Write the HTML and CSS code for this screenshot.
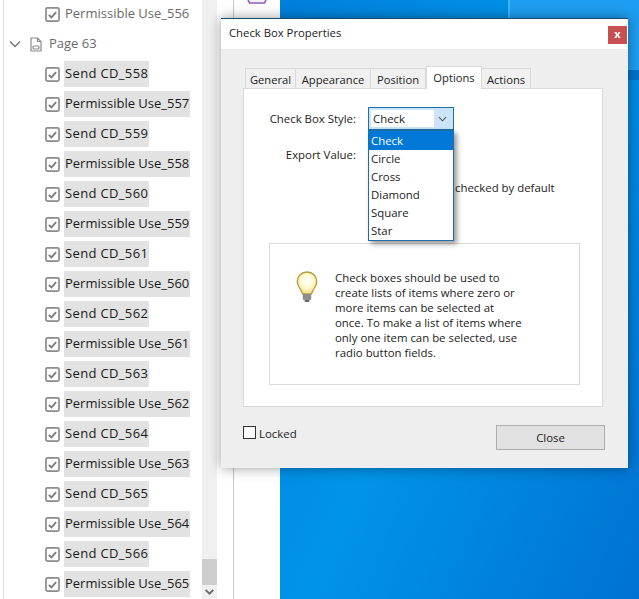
FILE: index.html
```html
<!DOCTYPE html>
<html lang="en">
<head>
<meta charset="utf-8">
<title>Check Box Properties</title>
<link rel="stylesheet" href="styles.css">
</head>
<body>
<div class="app">
  <aside class="tree">
    <div class="row"><svg class="cb" viewBox="0 0 14 14"><rect x=".9" y=".9" width="12.2" height="12.200" rx="1.500"/><path d="M3.600 7.400 6 9.600 10.400 4.800"/></svg><span class="name plain">Permissible Use_556</span></div>
    <div class="row page"><svg class="chev" viewBox="0 0 12 8"><path d="M1 1.500 6 6.500 11 1.500"/></svg><svg class="doc" viewBox="0 0 12 15"><path d="M1 1h6.500L11 4.500V14H1z M7.500 1v3.500H11"/><rect x="3" y="9" width="6" height="3" rx="1"/></svg><span class="pagename">Page 63</span></div>
    <div class="row"><svg class="cb" viewBox="0 0 14 14"><rect x=".9" y=".9" width="12.2" height="12.200" rx="1.500"/><path d="M3.600 7.400 6 9.600 10.400 4.800"/></svg><span class="name send">Send CD_558</span></div>
    <div class="row"><svg class="cb" viewBox="0 0 14 14"><rect x=".9" y=".9" width="12.2" height="12.200" rx="1.500"/><path d="M3.600 7.400 6 9.600 10.400 4.800"/></svg><span class="name">Permissible Use_557</span></div>
    <div class="row"><svg class="cb" viewBox="0 0 14 14"><rect x=".9" y=".9" width="12.2" height="12.200" rx="1.500"/><path d="M3.600 7.400 6 9.600 10.400 4.800"/></svg><span class="name send">Send CD_559</span></div>
    <div class="row"><svg class="cb" viewBox="0 0 14 14"><rect x=".9" y=".9" width="12.2" height="12.200" rx="1.500"/><path d="M3.600 7.400 6 9.600 10.400 4.800"/></svg><span class="name">Permissible Use_558</span></div>
    <div class="row"><svg class="cb" viewBox="0 0 14 14"><rect x=".9" y=".9" width="12.2" height="12.200" rx="1.500"/><path d="M3.600 7.400 6 9.600 10.400 4.800"/></svg><span class="name send">Send CD_560</span></div>
    <div class="row"><svg class="cb" viewBox="0 0 14 14"><rect x=".9" y=".9" width="12.2" height="12.200" rx="1.500"/><path d="M3.600 7.400 6 9.600 10.400 4.800"/></svg><span class="name">Permissible Use_559</span></div>
    <div class="row"><svg class="cb" viewBox="0 0 14 14"><rect x=".9" y=".9" width="12.2" height="12.200" rx="1.500"/><path d="M3.600 7.400 6 9.600 10.400 4.800"/></svg><span class="name send">Send CD_561</span></div>
    <div class="row"><svg class="cb" viewBox="0 0 14 14"><rect x=".9" y=".9" width="12.2" height="12.200" rx="1.500"/><path d="M3.600 7.400 6 9.600 10.400 4.800"/></svg><span class="name">Permissible Use_560</span></div>
    <div class="row"><svg class="cb" viewBox="0 0 14 14"><rect x=".9" y=".9" width="12.2" height="12.200" rx="1.500"/><path d="M3.600 7.400 6 9.600 10.400 4.800"/></svg><span class="name send">Send CD_562</span></div>
    <div class="row"><svg class="cb" viewBox="0 0 14 14"><rect x=".9" y=".9" width="12.2" height="12.200" rx="1.500"/><path d="M3.600 7.400 6 9.600 10.400 4.800"/></svg><span class="name">Permissible Use_561</span></div>
    <div class="row"><svg class="cb" viewBox="0 0 14 14"><rect x=".9" y=".9" width="12.2" height="12.200" rx="1.500"/><path d="M3.600 7.400 6 9.600 10.400 4.800"/></svg><span class="name send">Send CD_563</span></div>
    <div class="row"><svg class="cb" viewBox="0 0 14 14"><rect x=".9" y=".9" width="12.2" height="12.200" rx="1.500"/><path d="M3.600 7.400 6 9.600 10.400 4.800"/></svg><span class="name">Permissible Use_562</span></div>
    <div class="row"><svg class="cb" viewBox="0 0 14 14"><rect x=".9" y=".9" width="12.2" height="12.200" rx="1.500"/><path d="M3.600 7.400 6 9.600 10.400 4.800"/></svg><span class="name send">Send CD_564</span></div>
    <div class="row"><svg class="cb" viewBox="0 0 14 14"><rect x=".9" y=".9" width="12.2" height="12.200" rx="1.500"/><path d="M3.600 7.400 6 9.600 10.400 4.800"/></svg><span class="name">Permissible Use_563</span></div>
    <div class="row"><svg class="cb" viewBox="0 0 14 14"><rect x=".9" y=".9" width="12.2" height="12.200" rx="1.500"/><path d="M3.600 7.400 6 9.600 10.400 4.800"/></svg><span class="name send">Send CD_565</span></div>
    <div class="row"><svg class="cb" viewBox="0 0 14 14"><rect x=".9" y=".9" width="12.2" height="12.200" rx="1.500"/><path d="M3.600 7.400 6 9.600 10.400 4.800"/></svg><span class="name">Permissible Use_564</span></div>
    <div class="row"><svg class="cb" viewBox="0 0 14 14"><rect x=".9" y=".9" width="12.2" height="12.200" rx="1.500"/><path d="M3.600 7.400 6 9.600 10.400 4.800"/></svg><span class="name send">Send CD_566</span></div>
    <div class="row"><svg class="cb" viewBox="0 0 14 14"><rect x=".9" y=".9" width="12.2" height="12.200" rx="1.500"/><path d="M3.600 7.400 6 9.600 10.400 4.800"/></svg><span class="name">Permissible Use_565</span></div>
  </aside>
  <div class="scrollbar">
    <div class="thumb"></div>
    <svg class="sb-arrow" viewBox="0 0 10 7"><path d="M1.500 1.500 5 5 8.500 1.500"/></svg>
  </div>
  <div class="gutter"></div>
  <div class="rail"><svg class="rail-icon" viewBox="0 0 20 4"><path d="M1 0 2.500 3H17.500L19 0"/></svg></div>
  <main class="desktop"></main>
</div>

<section class="dialog">
  <header class="titlebar">
    <span class="title">Check Box Properties</span>
    <span class="close-x">x</span>
  </header>
  <div class="body">
    <nav class="tabs">
      <span class="tab tab-general">General</span>
      <span class="tab tab-appearance">Appearance</span>
      <span class="tab tab-position">Position</span>
      <span class="tab tab-options active">Options</span>
      <span class="tab tab-actions">Actions</span>
    </nav>
    <div class="panel">
      <div class="field">
        <span class="label">Check Box Style:</span>
        <div class="select">
          <span class="select-value">Check</span>
          <span class="select-btn"><svg viewBox="0 0 10 6"><path d="M1 1 5 5 9 1"/></svg></span>
          <ul class="listbox">
            <li class="selected">Check</li>
            <li>Circle</li>
            <li>Cross</li>
            <li>Diamond</li>
            <li>Square</li>
            <li>Star</li>
          </ul>
        </div>
      </div>
      <div class="field export">
        <span class="label">Export Value:</span>
      </div>
      <div class="default-row">checked by default</div>
      <div class="info">
        <svg class="bulb" viewBox="0 0 22 32">
          <defs><radialGradient id="glow" cx="50%" cy="40%" r="58%"><stop offset="0" stop-color="#ffffff"/><stop offset=".5" stop-color="#fffbd8"/><stop offset="1" stop-color="#f7df86"/></radialGradient></defs>
          <path class="glass" d="M11 1C5.400 1 1.200 5.200 1.200 10.400c0 3.300 1.500 5.400 3.200 8 .9 1.400 1.900 2.900 2.100 4.600h9c.2-1.700 1.200-3.200 2.100-4.600 1.700-2.600 3.200-4.700 3.200-8C20.800 5.200 16.600 1 11 1z"/>
          <rect class="base" x="6.800" y="23" width="8.400" height="6" rx="1"/>
          <rect class="tip" x="8.500" y="29" width="5" height="2" rx="1"/>
        </svg>
        <p class="info-text">Check boxes should be used to create lists of items where zero or more items can be selected at once. To make a list of items where only one item can be selected, use radio button fields.</p>
      </div>
    </div>
    <div class="footer">
      <label class="locked"><span class="box"></span><span class="locked-text">Locked</span></label>
      <span class="btn">Close</span>
    </div>
  </div>
</section>
</body>
</html>
```

FILE: styles.css
```css
* { box-sizing: border-box; }
html, body { margin: 0; height: 100%; overflow: hidden; }
body { font-family: "Open Sans", "Noto Sans", sans-serif; font-size: 11.4px; color: #1c1c1c; }

.app { display: flex; height: 599px; width: 639px; background: #fff; }

.tree { width: 202px; flex: none; border-left: 1px solid #fff; overflow: hidden; background: #fff; box-shadow: inset 2px 0 0 #fff, inset 3px 0 0 #dcdcdc; }
.row { height: 30px; display: flex; align-items: center; padding-left: 44px; }
.row:first-child { margin-top: -1px; }
.cb { width: 15px; height: 15px; flex: none; margin-right: 4px; fill: none; }
.cb rect { stroke: #8b8b8b; stroke-width: 1.600; }
.cb path { stroke: #7f7f7f; stroke-width: 1.800; }
.name { height: 26px; line-height: 25px; padding: 0 1px; background: #e2e2e2; font-size: 13px; color: #1a1a1a; white-space: nowrap; }
.name.send { letter-spacing: .35px; }
.name.plain { background: none; color: #6a6a6a; }
.page { padding-left: 8px; }
.chev { width: 12px; height: 8px; flex: none; fill: none; stroke: #777; stroke-width: 1.500; margin-right: 9px; }
.doc { width: 12px; height: 15px; flex: none; fill: none; stroke: #8a8a8a; stroke-width: 1.200; margin-right: 7px; }
.pagename { font-size: 13px; color: #6a6a6a; line-height: 17px; padding-bottom: 2px; }

.scrollbar { width: 15px; flex: none; background: #f0f0f0; display: flex; flex-direction: column; justify-content: flex-end; }
.thumb { height: 26px; background: #cdcdcd; }
.sb-arrow { width: 15px; height: 14px; padding: 3px 2px; fill: none; stroke: #666; stroke-width: 1.600; flex: none; }
.gutter { width: 17px; flex: none; background: #fff; border-right: 1px solid #c8c8c8; }
.rail { width: 46px; flex: none; background: #fff; }
.rail-icon { display: block; width: 20px; height: 4px; margin-left: 13px; fill: #f4f0fb; stroke: #8e5fc4; stroke-width: 1.600; }
.desktop { flex: 1; background:
    linear-gradient(#38b8f6, #38b8f6) 228px 0 / 2px 70px no-repeat,
    linear-gradient(#1e9ef2, #1e9ef2) 230px 0 / 130px 70px no-repeat,
    linear-gradient(#0072cc, #0072cc) 228px 70px / 132px 10px no-repeat,
    linear-gradient(115deg, #0080dc 0%, #0094e8 48%, #0072d2 100%); }

.dialog { position: absolute; left: 221px; top: 18px; width: 407px; height: 450px; background: #eee; border-top: 1px solid #1a4a6c; box-shadow: 0 0 12px rgba(0,0,0,.4); display: flex; flex-direction: column; }
.titlebar { height: 30px; background: #fff; display: flex; align-items: center; justify-content: space-between; padding: 0 1px 0 8px; flex: none; }
.title { font-size: 11.300px; color: #222; line-height: 16px; padding-bottom: 2px; }
.close-x { width: 19px; height: 18px; margin-top: 2px; background: #c75050; color: #fff; font-size: 11px; font-weight: 700; line-height: 16px; text-align: center; }
.body { flex: 1; padding: 17px 23px 0 22px; display: flex; flex-direction: column; }
.tabs { display: flex; align-items: flex-start; height: 23px; padding-left: 2px; position: relative; z-index: 1; margin-bottom: -1px; }
.tab { height: 20px; margin-top: 2px; line-height: 21px; text-align: center; font-size: 11.200px; border: 1px solid #d9d9d9; border-bottom: 0; border-left-width: 0; background: #f0f0f0; color: #222; }
.tab-general { width: 51px; border-left-width: 1px; }
.tab-appearance { width: 75px; }
.tab-position { width: 55px; }
.tab-options { width: 56px; }
.tab-actions { width: 49px; }
.tab.active { height: 23px; margin-top: 0; line-height: 21px; background: #fff; border-left: 1px solid #d9d9d9; color: #1c1c1c; }

.panel { width: 360px; height: 319px; background: #fff; border: 1px solid #d9d9d9; padding: 18px 25px 0; flex: none; }
.field { display: flex; align-items: center; height: 23px; }
.label { width: 87px; text-align: right; flex: none; white-space: nowrap; }
.select { width: 86px; height: 23px; margin-left: 12px; border: 1px solid #1c6ea4; background: #cce4f7; display: flex; position: relative; padding: 2px; }
.select-value { width: 63px; height: 17px; background: #fff; padding-left: 2px; line-height: 17px; }
.select-btn { flex: 1; display: flex; align-items: center; justify-content: center; }
.select-btn svg { width: 9px; height: 6px; fill: none; stroke: #555; stroke-width: 1.200; }
.listbox { list-style: none; margin: 0; padding: 0; position: absolute; left: -1px; top: 22px; width: 86px; height: 111px; background: #fff; border: 1px solid #1c6ea4; box-shadow: 3px 3px 5px rgba(0,0,0,.4); z-index: 2; }
.listbox li { height: 18px; line-height: 18px; padding-left: 2px; color: #222; }
.listbox li.selected { background: #0078d7; color: #fff; height: 19px; padding-top: 1px; }
.export { margin-top: 13px; }
.default-row { margin-top: 11px; margin-left: 186px; height: 22px; line-height: 22px; white-space: nowrap; }
.info { width: 311px; height: 142px; margin-top: 44px; border: 1px solid #d9d9d9; display: flex; padding: 26px 0 0 26px; }
.bulb { width: 22px; height: 32px; flex: none; margin: 1px 17px 0 0; }
.glass { fill: url(#glow); stroke: #b89a3c; stroke-width: 1.300; }
.base { fill: #8d8d8d; }
.tip { fill: #666; }
.info-text { margin: 0; width: 188px; line-height: 15px; color: #222; }

.footer { display: flex; justify-content: space-between; align-items: flex-start; padding-top: 18px; }
.locked { display: flex; align-items: center; height: 15px; gap: 3px; }
.locked-text { padding-top: 2px; }
.box { width: 13px; height: 13px; background: #fff; border: 1px solid #333; }
.btn { width: 109px; height: 25px; background: #e1e1e1; border: 1px solid #adadad; text-align: center; line-height: 24px; }
```
